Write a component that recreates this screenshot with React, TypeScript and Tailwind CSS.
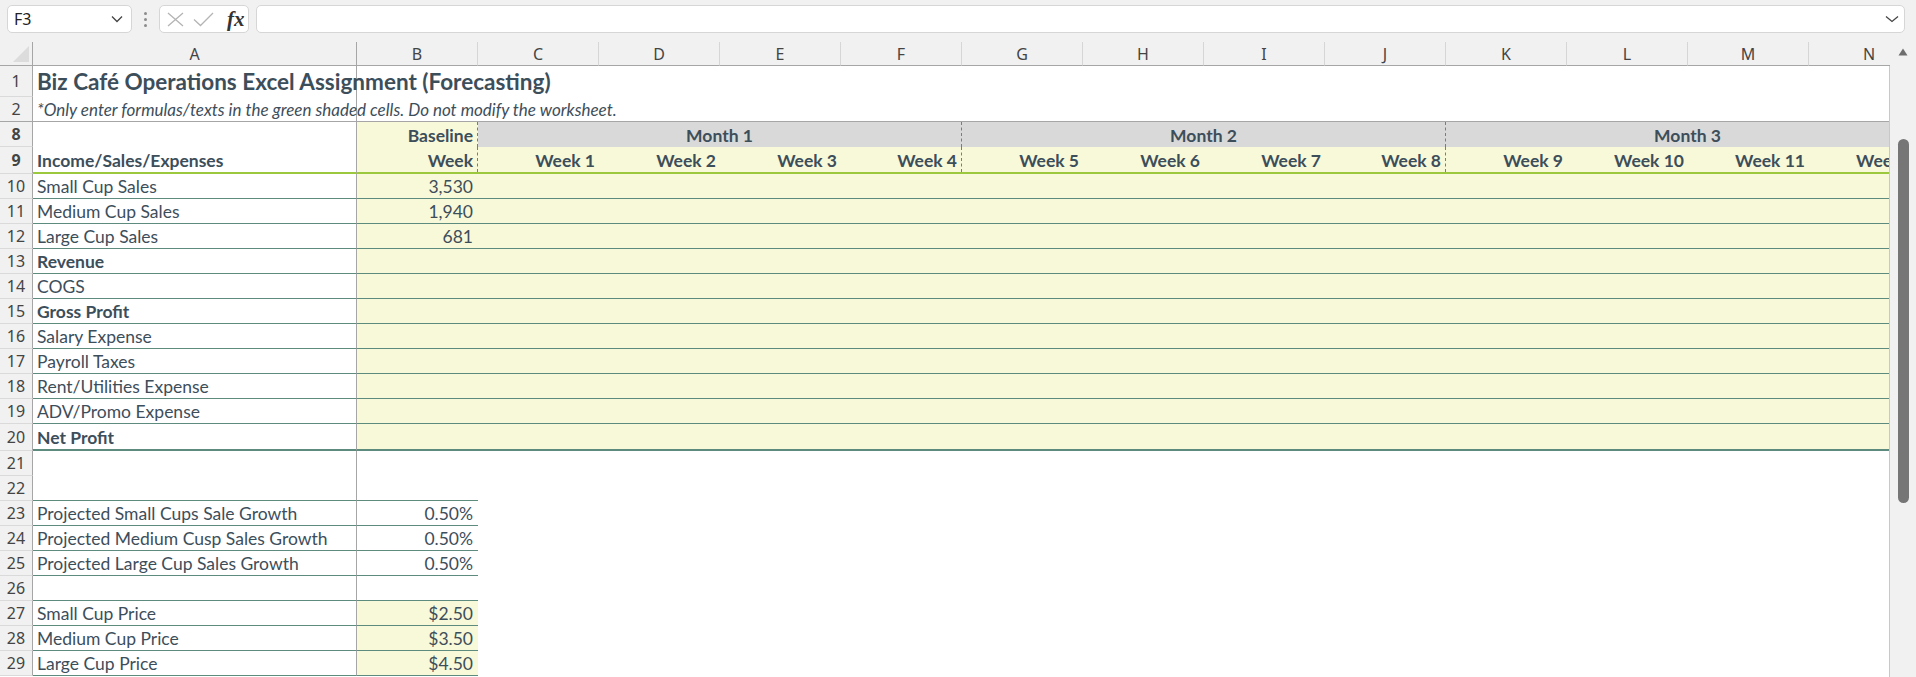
import React from 'react';

const ink = 'text-[#3d4e5b]';
const body = "font-['Lato',sans-serif]";
const ui = "font-['Noto_Sans',sans-serif]";

const columns = ['B', 'C', 'D', 'E', 'F', 'G', 'H', 'I', 'J', 'K', 'L', 'M', 'N'];
const weeks = Array.from({ length: 12 }, (_, i) => `Week ${i + 1}`);

const lines = [
  { n: 10, label: 'Small Cup Sales', value: '3,530' },
  { n: 11, label: 'Medium Cup Sales', value: '1,940' },
  { n: 12, label: 'Large Cup Sales', value: '681' },
  { n: 13, label: 'Revenue', bold: true },
  { n: 14, label: 'COGS' },
  { n: 15, label: 'Gross Profit', bold: true },
  { n: 16, label: 'Salary Expense' },
  { n: 17, label: 'Payroll Taxes' },
  { n: 18, label: 'Rent/Utilities Expense' },
  { n: 19, label: 'ADV/Promo Expense' },
  { n: 20, label: 'Net Profit', bold: true, last: true },
];

const inputs = [
  { n: 23, label: 'Projected Small Cups Sale Growth', value: '0.50%' },
  { n: 24, label: 'Projected Medium Cusp Sales Growth', value: '0.50%' },
  { n: 25, label: 'Projected Large Cup Sales Growth', value: '0.50%' },
  { n: 26, label: '', value: '' },
  { n: 27, label: 'Small Cup Price', value: '$2.50', shaded: true },
  { n: 28, label: 'Medium Cup Price', value: '$3.50', shaded: true },
  { n: 29, label: 'Large Cup Price', value: '$4.50', shaded: true },
];

const RowNum = ({ n }: { n: number }) => (
  <div
    className={`w-[33px] shrink-0 bg-[#f1f1f1] border-r border-b border-[#a6a6a6] border-b-[#dadada] flex items-center justify-center text-[16px] text-[#444] ${ui}`}
  >
    {n}
  </div>
);

const Toolbar = () => (
  <div className="h-[42px] flex items-start pt-[5px] pl-[7px]">
    <div className="w-[125px] h-[28px] bg-white border border-[#d6d6d6] rounded-[5px] flex items-center justify-between pl-[6px] pr-[8px]">
      <span className={`text-[16px] text-[#222] ${ui}`}>F3</span>
      <svg width="12" height="8" viewBox="0 0 12 8">
        <polyline points="1,1.5 6,6.5 11,1.5" fill="none" stroke="#444" strokeWidth="1.3" />
      </svg>
    </div>
    <div className="w-[27px] h-[28px] flex flex-col items-center justify-center gap-[3px]">
      <span className="w-[3px] h-[3px] rounded-full bg-[#8c8c8c]" />
      <span className="w-[3px] h-[3px] rounded-full bg-[#8c8c8c]" />
      <span className="w-[3px] h-[3px] rounded-full bg-[#8c8c8c]" />
    </div>
    <div className="w-[90px] h-[28px] bg-white border border-[#d6d6d6] rounded-[5px] flex items-center pl-[7px]">
      <svg width="17" height="15" viewBox="0 0 17 15">
        <path d="M1 1 L16 14 M16 1 L1 14" stroke="#b4b4b4" strokeWidth="1.3" fill="none" />
      </svg>
      <svg width="21" height="15" viewBox="0 0 21 15" className="ml-[9px]">
        <polyline points="1,7.5 7.5,13.5 20,1" stroke="#b4b4b4" strokeWidth="1.3" fill="none" />
      </svg>
      <span className="ml-[13px] font-['Liberation_Serif',serif] italic font-bold text-[21px] leading-none text-[#333]">
        fx
      </span>
    </div>
    <div className="ml-[7px] w-[1649px] h-[28px] bg-white border border-[#d6d6d6] rounded-[5px] flex items-center justify-end pr-[5px]">
      <svg width="14" height="8" viewBox="0 0 14 8">
        <polyline points="1,1.5 7,6.5 13,1.5" fill="none" stroke="#444" strokeWidth="1.3" />
      </svg>
    </div>
  </div>
);

const ColumnHeader = () => (
  <div className="flex h-[24px]">
    <div className="w-[33px] shrink-0 border-r border-b border-[#a6a6a6] flex items-end justify-end pr-[3px] pb-[3px]">
      <svg width="16" height="16" viewBox="0 0 16 16">
        <polygon points="16,0 16,16 0,16" fill="#dcdcdc" />
      </svg>
    </div>
    <div className={`w-[324px] shrink-0 border-r border-b border-[#a6a6a6] flex items-center justify-center text-[16px] text-[#444] ${ui}`}>
      A
    </div>
    {columns.map((c) => (
      <div
        key={c}
        className={`w-[121px] shrink-0 border-r border-b border-[#d6d6d6] border-b-[#a6a6a6] flex items-center justify-center text-[16px] text-[#444] ${ui}`}
      >
        {c}
      </div>
    ))}
  </div>
);

const Grid = () => (
  <div className={`bg-white ${body} ${ink}`}>
    {/* row 1 */}
    <div className="flex h-[31px]">
      <RowNum n={1} />
      <div className="w-[324px] shrink-0 border-r border-[#a6a6a6] flex items-end pl-[4px] pb-[2px] whitespace-nowrap">
        <span className="text-[22.5px] leading-[26px] font-bold">Biz Café Operations Excel Assignment (Forecasting)</span>
      </div>
      <div className="w-[1573px] shrink-0" />
    </div>
    {/* row 2 */}
    <div className="flex h-[25px] border-b border-[#a6a6a6]">
      <div className={`w-[33px] shrink-0 bg-[#f1f1f1] border-r border-[#a6a6a6] flex items-center justify-center text-[16px] text-[#444] ${ui}`}>
        2
      </div>
      <div className="w-[324px] shrink-0 border-r border-[#a6a6a6] flex items-end pl-[4px] pb-[1px] whitespace-nowrap">
        <span className="text-[17px] leading-[20px] italic">
          *Only enter formulas/texts in the green shaded cells. Do not modify the worksheet.
        </span>
      </div>
      <div className="w-[1573px] shrink-0" />
    </div>
    {/* row 8 */}
    <div className="flex h-[25px] text-[17.5px] leading-[22px] font-bold">
      <RowNum n={8} />
      <div className="w-[324px] shrink-0 border-r border-[#a6a6a6]" />
      <div className="w-[121px] shrink-0 bg-[#f8f9d9] border-r border-dashed border-[#5d8c7f] flex items-end justify-end pr-[4px] pb-[0.5px]">
        Baseline
      </div>
      {['Month 1', 'Month 2', 'Month 3'].map((m) => (
        <div
          key={m}
          className="w-[484px] shrink-0 bg-[#d9d9d9] border-r border-dashed border-[#5d8c7f] flex items-end justify-center pb-[0.5px]"
        >
          {m}
        </div>
      ))}
    </div>
    {/* row 9 */}
    <div className="flex h-[27px] text-[17.5px] leading-[22px] font-bold">
      <RowNum n={9} />
      <div className="w-[324px] shrink-0 border-r border-[#a6a6a6] border-b-2 border-b-[#9bc83c] flex items-end pl-[4px] pb-[0.5px]">
        Income/Sales/Expenses
      </div>
      <div className="w-[121px] shrink-0 bg-[#f8f9d9] border-b-2 border-b-[#9bc83c] flex">
        <div className="flex-1 border-r border-dashed border-[#5d8c7f] flex items-end justify-end pr-[4px] pb-[0.5px]">
          Week
        </div>
      </div>
      {weeks.map((w, i) => (
        <div key={w} className="w-[121px] shrink-0 bg-[#f8f9d9] border-b-2 border-b-[#9bc83c] flex">
          <div
            className={`flex-1 flex items-end justify-end pr-[4px] pb-[0.5px] whitespace-nowrap ${
              i === 3 || i === 7 ? 'border-r border-dashed border-[#5d8c7f]' : ''
            }`}
          >
            {w}
          </div>
        </div>
      ))}
    </div>
    {/* rows 10-20 */}
    {lines.map((r) => (
      <div key={r.n} className={`flex text-[17.5px] leading-[22px] ${r.last ? 'h-[27px]' : 'h-[25px]'}`}>
        <RowNum n={r.n} />
        <div
          className={`w-[324px] shrink-0 border-r border-[#a6a6a6] border-b-[#5d8c7f] flex items-end pl-[4px] ${
            r.last ? 'border-b-2' : 'border-b'
          } ${r.bold ? 'font-bold' : ''}`}
        >
          {r.label}
        </div>
        <div
          className={`w-[121px] shrink-0 bg-[#f8f9d9] border-[#5d8c7f] flex items-end justify-end pr-[5px] ${
            r.last ? 'border-b-2' : 'border-b'
          }`}
        >
          {r.value}
        </div>
        <div className={`w-[1452px] shrink-0 bg-[#f8f9d9] border-[#5d8c7f] ${r.last ? 'border-b-2' : 'border-b'}`} />
      </div>
    ))}
    {/* rows 21-22 */}
    <div className="flex h-[25px]">
      <RowNum n={21} />
      <div className="w-[324px] shrink-0 border-r border-[#a6a6a6]" />
    </div>
    <div className="flex h-[25px]">
      <RowNum n={22} />
      <div className="w-[324px] shrink-0 border-r border-b border-[#a6a6a6] border-b-[#5d8c7f]" />
      <div className="w-[121px] shrink-0 border-b border-[#5d8c7f]" />
    </div>
    {/* rows 23-29 */}
    {inputs.map((r) => (
      <div key={r.n} className="flex h-[25px] text-[17.5px] leading-[22px]">
        <RowNum n={r.n} />
        <div className="w-[324px] shrink-0 border-r border-b border-[#a6a6a6] border-b-[#5d8c7f] flex items-end pl-[4px] whitespace-nowrap">
          {r.label}
        </div>
        <div
          className={`w-[121px] shrink-0 border-b border-[#5d8c7f] flex items-end justify-end pr-[5px] ${
            r.shaded ? 'bg-[#f8f9d9]' : ''
          }`}
        >
          {r.value}
        </div>
      </div>
    ))}
  </div>
);

const Scrollbar = () => (
  <div className="w-[26px] shrink-0 flex flex-col items-center pt-[6px]">
    <svg width="10" height="8" viewBox="0 0 10 8">
      <polygon points="5,0.5 9.5,7.5 0.5,7.5" fill="#6e6e6e" />
    </svg>
    <div className="mt-[83px] w-[11px] h-[364px] rounded-full bg-[#767676]" />
  </div>
);

export default function App() {
  return (
    <div className="w-[1916px] h-[677px] overflow-hidden bg-[#f1f1f1]">
      <Toolbar />
      <div className="flex">
        <div className="w-[1890px] shrink-0 overflow-hidden">
          <ColumnHeader />
          <div className="h-[611px] overflow-hidden border-r border-[#c8c8c8] bg-white">
            <Grid />
          </div>
        </div>
        <Scrollbar />
      </div>
    </div>
  );
}
